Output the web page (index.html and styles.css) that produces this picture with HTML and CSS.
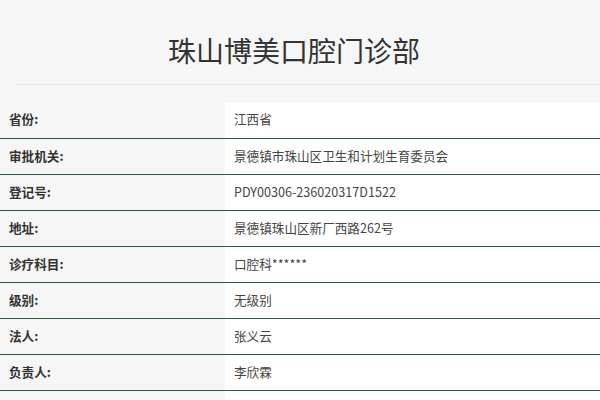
FILE: index.html
```html
<!DOCTYPE html>
<html lang="zh-CN">
<head>
<meta charset="utf-8">
<title>珠山博美口腔门诊部</title>
<link rel="stylesheet" href="styles.css">
</head>
<body>
<div class="page">
  <header class="head">
    <h1 class="title">珠山博美口腔门诊部</h1>
  </header>
  <div class="rule"></div>
  <table class="info">
    <tbody>
      <tr><th>省份:</th><td>江西省</td></tr>
      <tr><th>审批机关:</th><td>景德镇市珠山区卫生和计划生育委员会</td></tr>
      <tr><th>登记号:</th><td>PDY00306-236020317D1522</td></tr>
      <tr><th>地址:</th><td>景德镇珠山区新厂西路262号</td></tr>
      <tr><th>诊疗科目:</th><td>口腔科******</td></tr>
      <tr><th>级别:</th><td>无级别</td></tr>
      <tr><th>法人:</th><td>张义云</td></tr>
      <tr><th>负责人:</th><td>李欣霖</td></tr>
      <tr class="tail"><th></th><td></td></tr>
    </tbody>
  </table>
</div>
</body>
</html>
```

FILE: styles.css
```css
html, body {
  margin: 0;
  padding: 0;
  background: #f6f6f6;
}
body {
  font-family: "Noto Sans CJK SC", "Noto Sans", sans-serif;
  color: #333;
}
.page {
  width: 600px;
  height: 400px;
  overflow: hidden;
}
.head {
  height: 84px;
  display: flex;
  align-items: center;
  justify-content: center;
  padding-right: 12px;
  box-sizing: border-box;
}
.title {
  margin: 18px 0 0 0;
  font-size: 28px;
  font-weight: 400;
  color: #333;
  line-height: 1.2;
}
.rule {
  height: 1px;
  margin-left: 16px;
  background: #e9e9e9;
}
.info {
  margin-top: 17px;
  width: 100%;
  border-collapse: collapse;
  font-size: 12.6px;
}
.info tr {
  height: 36px;
  border-bottom: 1px solid #22603f;
}
.info th {
  width: 225px;
  padding: 0 0 2px 9px;
  box-sizing: border-box;
  text-align: left;
  font-weight: 700;
  color: #333;
  background: #f6f6f6;
}
.info td {
  padding: 0 0 2px 9px;
  color: #444;
  background: #fff;
}
```
